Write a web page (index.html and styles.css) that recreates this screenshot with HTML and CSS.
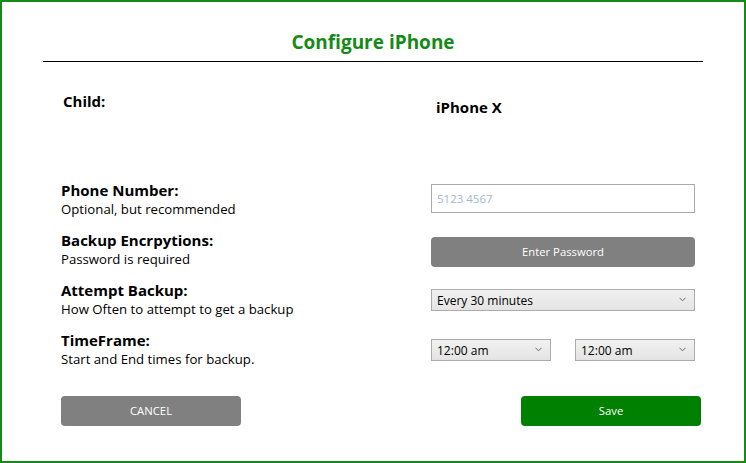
FILE: index.html
```html
<!DOCTYPE html>
<html>
<head>
<meta charset="utf-8">
<link rel="stylesheet" href="styles.css">
</head>
<body>
<div class="frame">
  <h1 class="title">Configure iPhone</h1>
  <div class="rule"></div>

  <div class="row child-row">
    <div class="label child-label">Child:</div>
    <div class="device">iPhone X</div>
  </div>

  <div class="form">
    <div class="row frow">
      <div><div class="label">Phone Number:</div><div class="desc">Optional, but recommended</div></div>
      <div class="ctl ctl-phone"><div class="input">5123 4567</div></div>
    </div>
    <div class="row frow">
      <div><div class="label">Backup Encrpytions:</div><div class="desc">Password is required</div></div>
      <div class="ctl ctl-pass"><div class="btn btn-gray btn-wide">Enter Password</div></div>
    </div>
    <div class="row frow">
      <div><div class="label">Attempt Backup:</div><div class="desc">How Often to attempt to get a backup</div></div>
      <div class="ctl ctl-attempt">
        <div class="select">Every 30 minutes<svg class="chev" width="7" height="5" viewBox="0 0 7 5"><path d="M0.5 0.8 L3.5 3.8 L6.5 0.8" fill="none" stroke="#666" stroke-width="1"/></svg></div>
      </div>
    </div>
    <div class="row frow">
      <div><div class="label">TimeFrame:</div><div class="desc">Start and End times for backup.</div></div>
      <div class="ctl ctl-time">
        <div class="select select-sm">12:00 am<svg class="chev" width="7" height="5" viewBox="0 0 7 5"><path d="M0.5 0.8 L3.5 3.8 L6.5 0.8" fill="none" stroke="#666" stroke-width="1"/></svg></div>
        <div class="select select-sm">12:00 am<svg class="chev" width="7" height="5" viewBox="0 0 7 5"><path d="M0.5 0.8 L3.5 3.8 L6.5 0.8" fill="none" stroke="#666" stroke-width="1"/></svg></div>
      </div>
    </div>
  </div>

  <div class="actions">
    <div class="btn btn-gray btn-action btn-cancel">CANCEL</div>
    <div class="btn btn-green btn-action">Save</div>
  </div>
</div>
</body>
</html>
```

FILE: styles.css
```css
html, body {
  margin: 0;
  padding: 0;
  background: #fff;
}
.frame {
  width: 746px;
  height: 463px;
  box-sizing: border-box;
  border: 2px solid #168a16;
  font-family: "Open Sans", "Noto Sans", sans-serif;
  color: #000;
  overflow: hidden;
}
.title {
  margin: 0;
  padding-top: 28px;
  line-height: 24px;
  font-size: 19px;
  font-weight: 700;
  color: #168a16;
  text-align: center;
}
.rule {
  margin: 7px 41px 0 41px;
  border-top: 1px solid #000;
}
.row {
  display: grid;
  grid-template-columns: 370px 264px;
  margin-left: 59px;
}
.child-row {
  margin-top: 30px;
  height: 19px;
}
.child-label {
  padding-left: 2px;
}
.label {
  font-size: 15px;
  font-weight: 700;
  line-height: 19px;
}
.desc {
  font-size: 13.2px;
  line-height: 19px;
}
.device {
  margin-top: 6px;
  padding-left: 5px;
  font-size: 15px;
  font-weight: 700;
  line-height: 19px;
}
.form {
  margin-top: 70px;
  display: flex;
  flex-direction: column;
}
.frow {
  height: 50px;
}
.ctl-phone { padding-top: 3px; }
.ctl-pass { padding-top: 6px; }
.ctl-attempt { padding-top: 8px; }
.ctl-time {
  padding-top: 8px;
  display: flex;
  justify-content: space-between;
  align-items: flex-start;
}
.input {
  height: 29px;
  box-sizing: border-box;
  border: 1px solid #ababab;
  padding-left: 5px;
  font-size: 11.5px;
  line-height: 27px;
  color: #a6b8cf;
}
.btn {
  box-sizing: border-box;
  border-radius: 4px;
  color: #fff;
  font-size: 11.3px;
  text-align: center;
  height: 30px;
  line-height: 30px;
}
.btn-gray { background: #808080; }
.btn-green { background: #008000; }
.select {
  position: relative;
  height: 22px;
  box-sizing: border-box;
  border: 1px solid #acacac;
  background: linear-gradient(#f1f1f1, #e4e4e4);
  padding-left: 5px;
  font-size: 12px;
  line-height: 21px;
  color: #000;
}
.select-sm {
  width: 120px;
}
.chev {
  position: absolute;
  right: 8px;
  top: 7px;
}
.actions {
  margin: 15px 43px 0 59px;
  display: flex;
  justify-content: space-between;
}
.btn-action {
  width: 180px;
}
```
